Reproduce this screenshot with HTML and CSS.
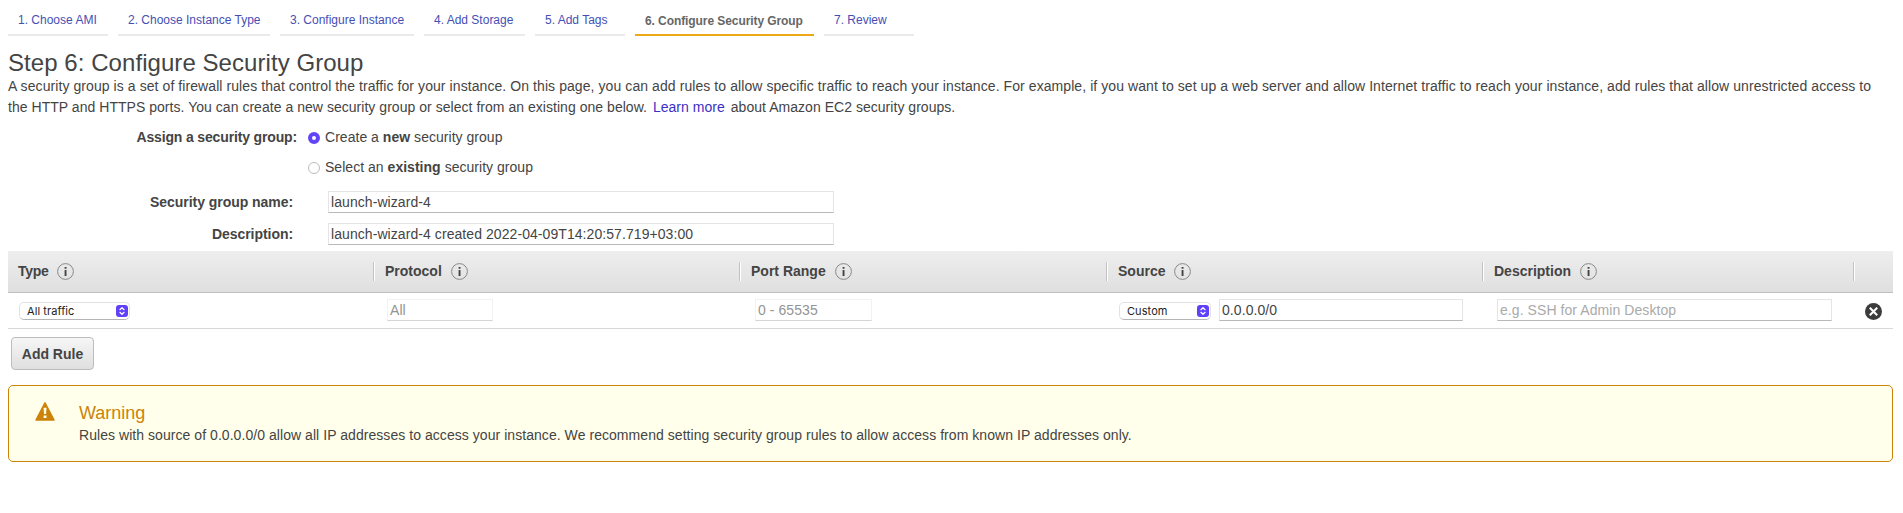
FILE: index.html
```html
<!DOCTYPE html>
<html lang="en">
<head>
<meta charset="utf-8">
<title>Configure Security Group</title>
<link rel="stylesheet" href="styles.css">
</head>
<body>
<svg class="defs" width="0" height="0">
  <symbol id="info" viewBox="0 0 17 17"><circle cx="8.5" cy="8.5" r="7.9" fill="none" stroke="#888" stroke-width="1"/><path d="M7.6 4h1.9v1.8H7.6zM7.6 7h1.9v6H7.6z" fill="#444"/></symbol>
  <symbol id="updown" viewBox="0 0 12 12"><rect width="12" height="12" rx="3" fill="#6040f8"/><path d="M3.9 4.7L6 2.7l2.1 2M3.9 7.3L6 9.3l2.1-2" fill="none" stroke="#fff" stroke-width="1.2" stroke-linecap="round" stroke-linejoin="round"/></symbol>
</svg>
<nav class="steps">
  <a class="step s1">1. Choose AMI</a>
  <a class="step s2">2. Choose Instance Type</a>
  <a class="step s3">3. Configure Instance</a>
  <a class="step s4">4. Add Storage</a>
  <a class="step s5">5. Add Tags</a>
  <a class="step s6 current">6. Configure Security Group</a>
  <a class="step s7">7. Review</a>
</nav>
<main>
  <h1>Step 6: Configure Security Group</h1>
  <p class="intro"><span class="line1">A security group is a set of firewall rules that control the traffic for your instance. On this page, you can add rules to allow specific traffic to reach your instance. For example, if you want to set up a web server and allow Internet traffic to reach your instance, add rules that allow unrestricted access to</span><br><span class="line2">the HTTP and HTTPS ports. You can create a new security group or select from an existing one below. <a class="more">Learn more</a> about Amazon EC2 security groups.</span></p>
  <div class="assign">
    <b class="assign-label">Assign a security group:</b>
    <div class="choices">
      <label class="choice"><span class="radio on"></span><span>Create a <b>new</b> security group</span></label>
      <label class="choice"><span class="radio"></span><span>Select an <b>existing</b> security group</span></label>
    </div>
  </div>
  <div class="field"><b class="label">Security group name:</b><div class="box wide">launch-wizard-4</div></div>
  <div class="field"><b class="label">Description:</b><div class="box wide">launch-wizard-4 created 2022-04-09T14:20:57.719+03:00</div></div>
  <section class="rules">
    <div class="row head">
      <div class="th"><span class="tight">Type</span><svg class="info"><use href="#info"/></svg></div>
      <div class="th"><span>Protocol</span><svg class="info"><use href="#info"/></svg></div>
      <div class="th"><span>Port Range</span><svg class="info"><use href="#info"/></svg></div>
      <div class="th"><span>Source</span><svg class="info"><use href="#info"/></svg></div>
      <div class="th"><span>Description</span><svg class="info"><use href="#info"/></svg></div>
      <div class="th"></div>
    </div>
    <div class="row body">
      <div class="td type"><div class="select"><span>All traffic</span><svg class="arrows"><use href="#updown"/></svg></div></div>
      <div class="td proto"><div class="box off">All</div></div>
      <div class="td port"><div class="box off">0 - 65535</div></div>
      <div class="td source"><div class="select"><span>Custom</span><svg class="arrows"><use href="#updown"/></svg></div><div class="box">0.0.0.0/0</div></div>
      <div class="td desc"><div class="box hint">e.g. SSH for Admin Desktop</div></div>
      <div class="td remove"><svg width="17" height="17" viewBox="0 0 17 17"><circle cx="8.5" cy="8.5" r="8.5" fill="#3c3c3c"/><path d="M4.8 4.8l7.4 7.4M12.2 4.8l-7.4 7.4" stroke="#fff" stroke-width="2.1"/></svg></div>
    </div>
  </section>
  <button class="add">Add Rule</button>
  <aside class="warning">
    <svg class="alert" width="20" height="19" viewBox="0 0 20 19"><path d="M10 .8L19 18H1z" fill="#cc830a" stroke="#cc830a" stroke-width="1.5" stroke-linejoin="round"/><path d="M8.6 5.8h2.9l-.4 6.2H9zM8.6 13.5h2.9v2.6H8.6z" fill="#ffffeb"/></svg>
    <div><h2>Warning</h2><p class="advice">Rules with source of 0.0.0.0/0 allow all IP addresses to access your instance. We recommend setting security group rules to allow access from known IP addresses only.</p></div>
  </aside>
</main>
</body>
</html>
```
FILE: styles.css
```css
* { box-sizing: border-box; }
body { margin: 0; padding: 0 10px 0 8px; font: 14px/21px "Liberation Sans", Arial, sans-serif; color: #444; background: #fff; white-space: nowrap; }
h1, h2, p { margin: 0; font-weight: 400; }
.defs { display: none; }
.steps { display: flex; gap: 10px; height: 36px; }
.step { border-bottom: 2px solid #eaeaea; padding: 10px 0 0 10px; font-size: 12px; line-height: 20px; color: #444fb5; }
.s1 { width: 100px; }
.s2 { width: 152px; }
.s3 { width: 134px; }
.s4 { width: 101px; }
.s5 { width: 90px; }
.s6 { width: 179px; }
.s7 { width: 90px; }
.step.current { border-color: #eba915; color: #666; font-weight: 700; padding-top: 11px; letter-spacing: -.08px; }
h1 { margin-top: 13px; height: 27px; font-size: 24px; line-height: 27px; letter-spacing: .06px; }
.intro { height: 43px; }
.line1 { letter-spacing: .078px; }
.line2 { letter-spacing: .035px; }
.more { color: #3b30c4; margin: 0 2px; }
.assign { display: flex; height: 72px; padding-top: 8px; }
.assign-label { width: 289px; text-align: right; letter-spacing: -.15px; }
.choices { margin-left: 11px; letter-spacing: .03px; }
.choice { display: flex; align-items: center; gap: 5px; height: 21px; margin-bottom: 9px; }
.radio { width: 12px; height: 12px; border: 1px solid #bbb; border-radius: 50%; }
.radio.on { border: 4px solid #6244f8; }
.field { display: flex; align-items: center; height: 22px; margin-bottom: 10px; }
.label { width: 285px; text-align: right; margin-right: 35px; letter-spacing: -.05px; }
.box { height: 22px; border: 1px solid #e5e5e5; border-bottom-color: #b8b8b8; padding: 0 2px; line-height: 20px; background: #fff; letter-spacing: .07px; }
.wide { width: 506px; }
.rules { margin-top: -4px; }
.row { display: grid; grid-template-columns: 367px 366px 367px 376px 371px 38px; }
.head { height: 42px; border-bottom: 1px solid #c0c0c0; background: linear-gradient(#eee, #dfdfdf); }
.th { display: flex; align-items: center; gap: 9px; padding-left: 10px; font-weight: 700; background: linear-gradient(90deg, #c2c2c2 1px, #fff 1px) no-repeat right 11px / 2px 19px; }
.th:last-child { background: none; }
.tight { letter-spacing: -.3px; }
.info { width: 17px; height: 17px; }
.body { height: 36px; border-bottom: 1px solid #d8d8d8; }
.td { display: flex; padding-top: 6px; }
.off { border-color: #f2f2f2; border-bottom-color: #d5d5d5; color: #949494; }
.hint { color: #aaa; }
.select { display: flex; align-items: center; justify-content: space-between; height: 18px; margin-top: 3px; padding: 0 1px 0 7px; border-radius: 5px; border: 1px solid #e2e2e2; border-bottom-color: #b5b5b5; font: 11px/16px Inter, sans-serif; letter-spacing: .08px; color: #222; }
.arrows { width: 12px; height: 12px; }
.type { padding-left: 11px; }
.type .select { width: 111px; }
.proto { padding-left: 12px; }
.proto .box { width: 106px; }
.port { padding-left: 14px; }
.port .box { width: 117px; }
.source { padding-left: 11px; gap: 8px; }
.source .select { width: 92px; }
.source .box { width: 244px; }
.desc { padding-left: 13px; }
.desc .box { width: 335px; }
.remove { padding: 10px 0 0 10px; }
.add { display: block; width: 83px; height: 33px; margin: 8px 0 0 3px; padding: 0; border: 1px solid #bcbcbc; border-radius: 4px; background: linear-gradient(#f6f6f6, #dfdfdf); font: bold 14px "Liberation Sans", Arial, sans-serif; color: #444; }
.warning { display: flex; height: 77px; margin-top: 15px; padding: 16px 0 0 26px; border: 1px solid #cc830a; border-radius: 5px; background: #ffffeb; }
.warning h2 { margin-top: 1px; font-size: 18px; line-height: 21px; color: #cc830a; }
.advice { margin-top: 1px; letter-spacing: .053px; }
.alert { margin-right: 24px; }
```
